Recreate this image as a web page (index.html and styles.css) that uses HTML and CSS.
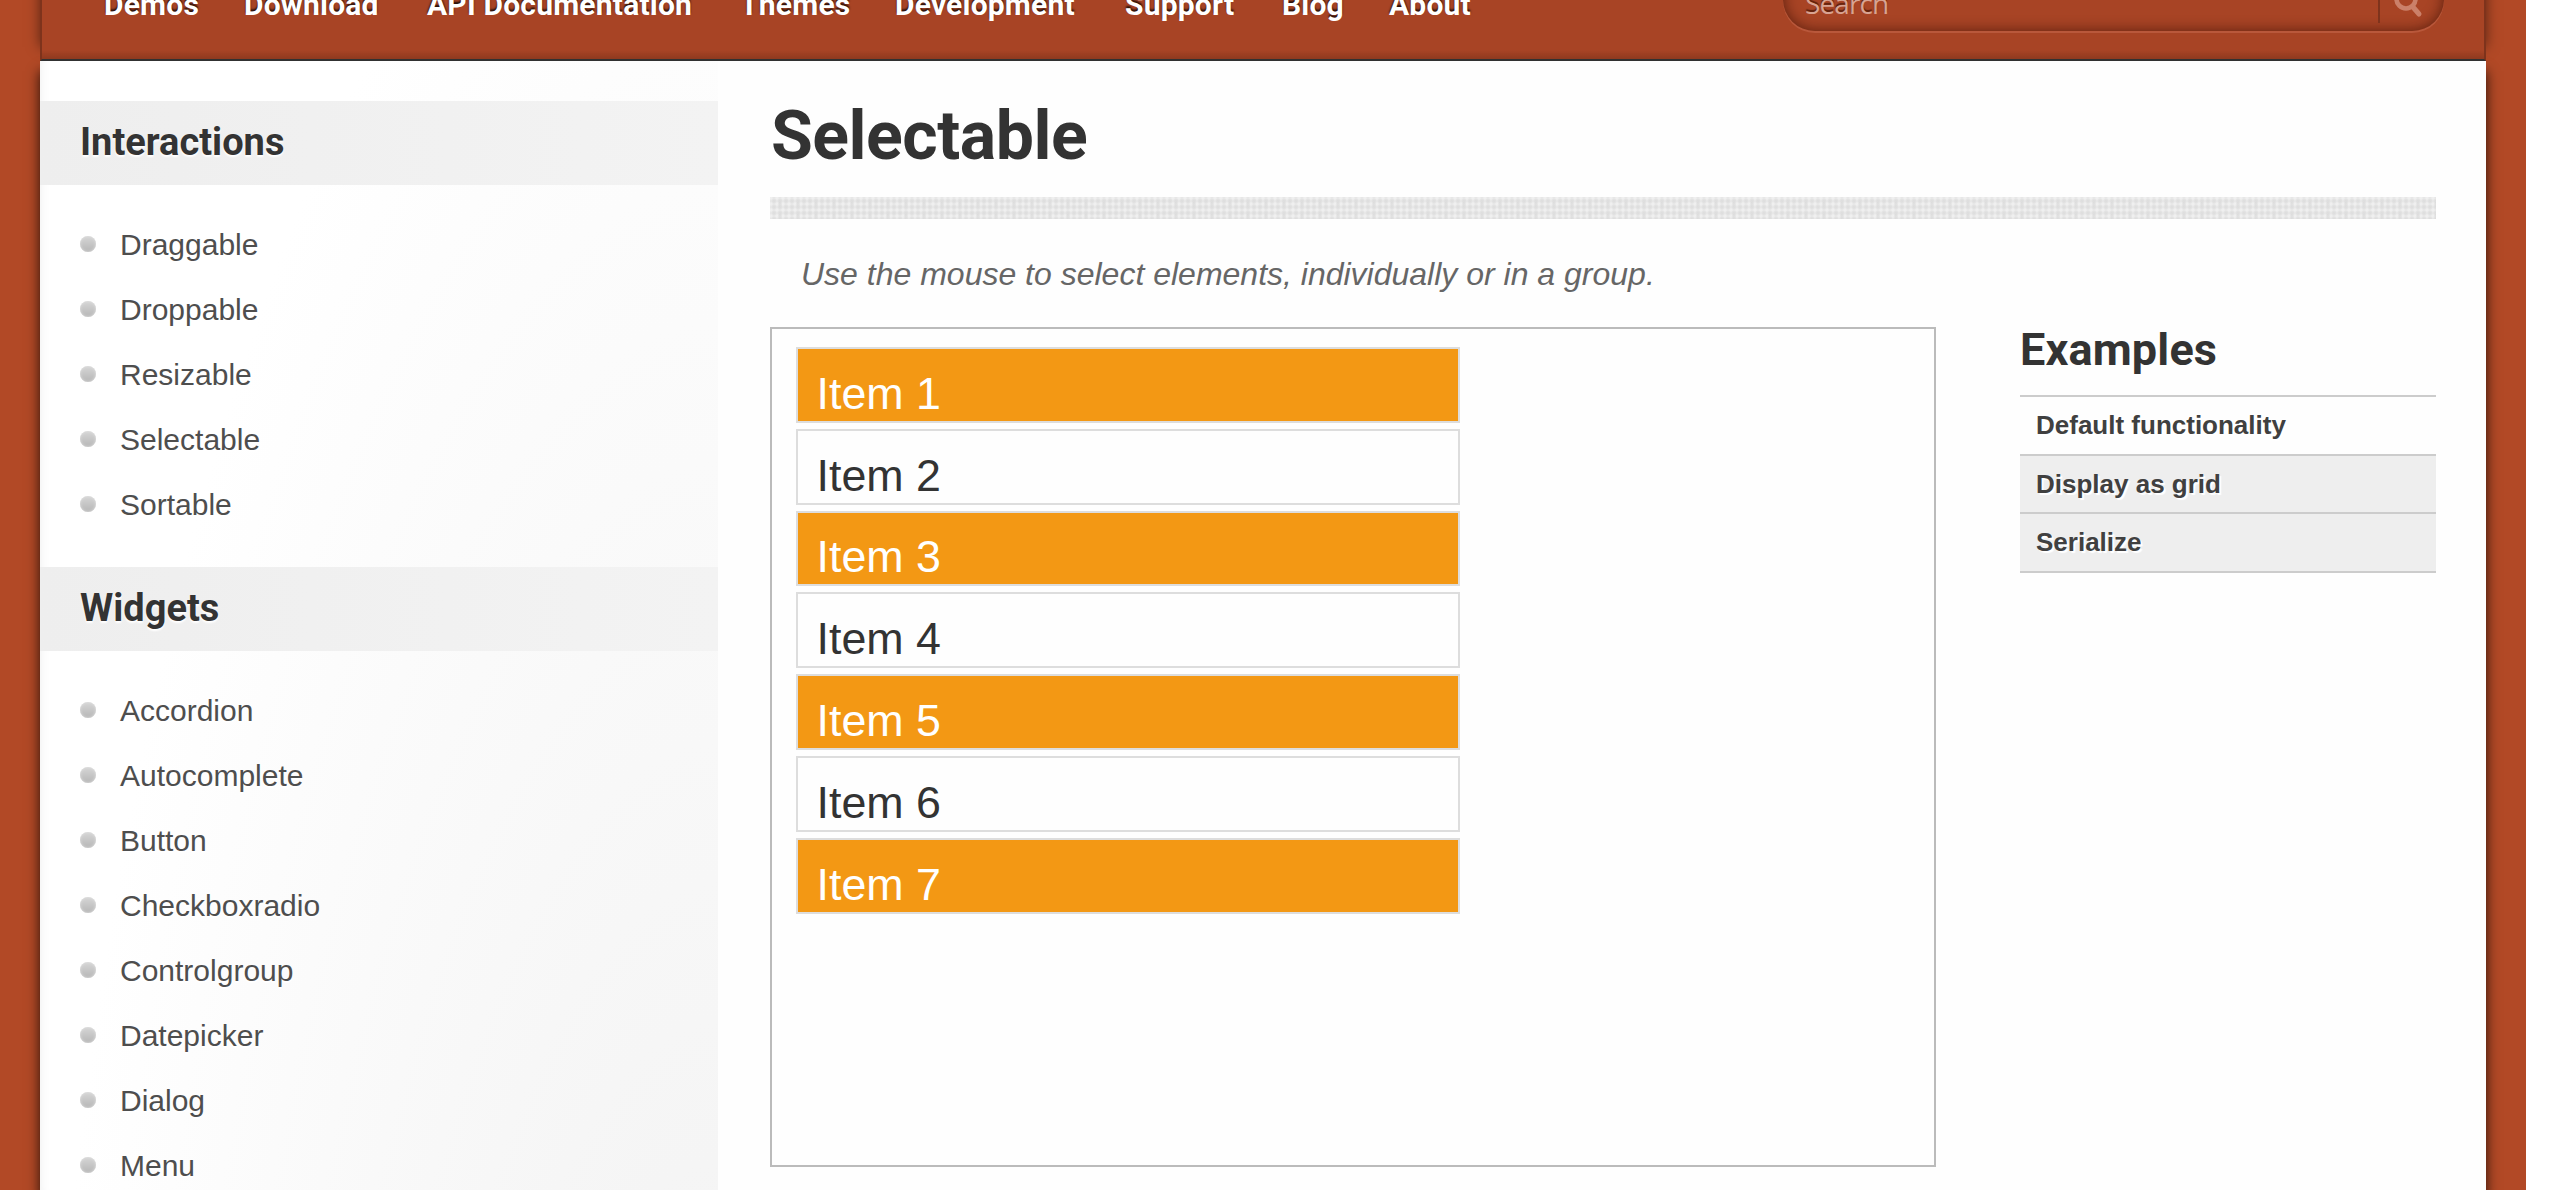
FILE: index.html
```html
<!DOCTYPE html>
<html lang="en">
<head>
<meta charset="utf-8">
<title>Selectable</title>
<link rel="stylesheet" href="styles.css">
</head>
<body>
<div class="page">
  <div class="container">
    <header class="header">
      <nav class="nav">
        <a>Demos</a><a>Download</a><a>API Documentation</a><a>Themes</a><a>Development</a><a>Support</a><a>Blog</a><a>About</a>
      </nav>
      <div class="search">
        <span class="search-text">Search</span>
        <span class="search-button"><svg width="30" height="34" viewBox="0 0 30 34"><circle cx="12" cy="14" r="9.5" fill="none" stroke="#cb8069" stroke-width="4.6"/><path d="M18.5 21.5L25 29" stroke="#cb8069" stroke-width="5" stroke-linecap="round"/></svg></span>
      </div>
    </header>
    <div class="content">
      <aside class="sidebar">
        <h3 class="band">Interactions</h3>
        <ul class="menu">
          <li>Draggable</li><li>Droppable</li><li>Resizable</li><li>Selectable</li><li>Sortable</li>
        </ul>
        <h3 class="band">Widgets</h3>
        <ul class="menu">
          <li>Accordion</li><li>Autocomplete</li><li>Button</li><li>Checkboxradio</li><li>Controlgroup</li><li>Datepicker</li><li>Dialog</li><li>Menu</li>
        </ul>
      </aside>
      <main class="main">
        <h1 class="title">Selectable</h1>
        <div class="rule"></div>
        <p class="intro">Use the mouse to select elements, individually or in a group.</p>
        <div class="demo-row">
          <div class="demo">
            <ol class="selectable">
              <li class="selected">Item 1</li><li>Item 2</li><li class="selected">Item 3</li><li>Item 4</li><li class="selected">Item 5</li><li>Item 6</li><li class="selected">Item 7</li>
            </ol>
          </div>
          <div class="examples">
            <h2 class="examples-title">Examples</h2>
            <ul class="examples-list">
              <li class="active">Default functionality</li><li>Display as grid</li><li>Serialize</li>
            </ul>
          </div>
        </div>
      </main>
    </div>
  </div>
</div>
</body>
</html>
```
FILE: styles.css
```css
* { box-sizing: border-box; }
html { background: #fff; }
body { margin: 0; font-family: "Liberation Sans", Arial, sans-serif; color: #333; overflow: hidden; }
h1, h2, h3, p, ul, ol { margin: 0; padding: 0; }
ul, ol { list-style: none; }

.page { width: 2526px; height: 1190px; padding: 0 40px; background: #b24926; overflow: hidden; }
.container { height: 1190px; display: flex; flex-direction: column; }

.header {
  height: 61px; flex: none; display: flex; justify-content: space-between; align-items: flex-start;
  background: linear-gradient(to bottom, rgba(0,0,0,0) 50px, rgba(0,0,0,.14) 59px), #a84425;
  border: 2px solid #7e331c; border-top: 0; border-bottom-color: #333;
  padding: 0 40px 0 62px;
  box-shadow: 0 -14px 12px rgba(0,0,0,.5);
}
.nav {
  display: grid; grid-template-columns: 140px 183px 313px 155px 230px 157px 107px auto;
  height: 48px; margin-top: -19px;
}
.nav a {
  font: bold 30px/48px Roboto, sans-serif; letter-spacing: .2px; color: #fff; white-space: nowrap;
  text-shadow: 0 -2px 2px rgba(0,0,0,.8);
}
.search {
  width: 661px; height: 66px; margin-top: -35px; display: flex; border-radius: 32px; background: #a84425;
  box-shadow: inset 0 0 14px rgba(50,10,0,.65), 0 2px 0 #b9583b;
}
.search-text {
  flex: 1; padding: 22px 0 0 22px; font: 28px/33px "Open Sans", sans-serif; letter-spacing: -.9px;
  color: #d8a392; text-shadow: 0 -2px 1px rgba(60,15,0,.7);
}
.search-button { width: 66px; height: 58px; border-left: 2px solid #7e331c; padding: 20px 0 0 14px; }

.content { flex: 1; display: flex; background: #fefefe; box-shadow: 0 10px 12px rgba(0,0,0,.8); min-height: 0; }
.sidebar {
  width: 678px; flex: none; padding-top: 40px;
  background: radial-gradient(680px 2100px at 100% 1800px, #f0f0f0, #fff);
  box-shadow: inset 10px 0 10px -8px rgba(0,0,0,.05);
}
.band {
  height: 84px; padding-left: 40px; font: bold 38px/82px Roboto, sans-serif; color: #333;
  background: linear-gradient(to right, #eee, #f3f3f3); text-shadow: 0 2px 2px #fff;
}
.menu { padding: 27px 0 30px 40px; }
.menu li {
  height: 65px; display: flex; align-items: center; gap: 24px; font-size: 30px; color: #4e4e4e;
  text-shadow: 0 2px 1px #fff;
}
.menu li::before {
  content: ""; width: 16px; height: 16px; margin-top: -1px; border-radius: 50%;
  background: linear-gradient(#d6d6d6, #b6b6b6); box-shadow: inset 0 0 3px #e2e2e2;
}

.main { flex: 1; padding: 35px 50px 0 52px; }
.title { height: 101px; padding-left: 1px; font: bold 68px/80px Roboto, sans-serif; letter-spacing: -.5px; }
.rule {
  height: 22px; background-color: #e8e8e8;
  background-image:
    radial-gradient(circle, rgba(205,205,205,.35) 1px, rgba(205,205,205,0) 2.6px),
    radial-gradient(circle, rgba(205,205,205,.25) 1px, rgba(205,205,205,0) 2.6px),
    radial-gradient(circle, rgba(244,244,244,.7) .5px, rgba(244,244,244,0) 2.4px);
  background-size: 6px 6px, 18px 12px, 6px 6px; background-position: 1px 1px, 1px 1px, 4px 4px;
}
.intro { height: 108px; padding: 35px 0 0 31px; font: italic 32px/40px "Liberation Sans", Arial, sans-serif; color: #666; }
.demo-row { display: flex; justify-content: space-between; align-items: flex-start; }
.demo { width: 1166px; height: 840px; border: 2px solid #bbb; padding: 18px 24px; }
.selectable { width: 664px; }
.selectable li {
  height: 75.84px; margin-bottom: 6px; border: 2px solid #ddd; padding: 17.75px 18.5px;
  font-size: 44.8px; line-height: 52px;
}
.selectable .selected { background: #f39814; color: #fff; }
.examples { width: 416px; }
.examples-title { height: 68px; font: bold 45px/46px Roboto, sans-serif; letter-spacing: .15px; }
.examples-list { border-top: 2px solid #ccc; }
.examples-list li {
  height: 58.67px; padding-left: 16px; border-bottom: 2px solid #ccc; background: #eee;
  font-weight: bold; font-size: 26px; line-height: 57px; color: #404040; text-shadow: 2px 2px 1px #fff;
}
.examples-list .active { background: none; }
```
